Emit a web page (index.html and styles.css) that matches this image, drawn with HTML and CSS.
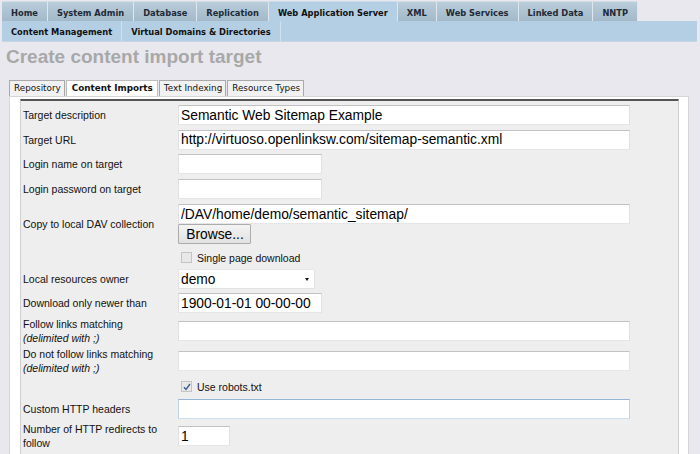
FILE: index.html
```html
<!DOCTYPE html>
<html>
<head>
<meta charset="utf-8">
<title>Create content import target</title>
<link rel="stylesheet" href="styles.css">
</head>
<body>
<div class="topnav">
  <a class="tab">Home</a>
  <a class="tab">System Admin</a>
  <a class="tab">Database</a>
  <a class="tab">Replication</a>
  <a class="tab active">Web Application Server</a>
  <a class="tab">XML</a>
  <a class="tab">Web Services</a>
  <a class="tab">Linked Data</a>
  <a class="tab">NNTP</a>
</div>
<div class="subnav">
  <a class="sub">Content Management</a>
  <a class="sub">Virtual Domains &amp; Directories</a>
</div>
<h1 class="title">Create content import target</h1>
<div class="ptabs">
  <span class="ptab">Repository</span>
  <span class="ptab active">Content Imports</span>
  <span class="ptab">Text Indexing</span>
  <span class="ptab">Resource Types</span>
</div>
<div class="panel">
  <div class="form">
    <div class="row h24">
      <div class="lbl">Target description</div>
      <div class="fld"><input class="in wide" type="text" value="Semantic Web Sitemap Example"></div>
    </div>
    <div class="row h25">
      <div class="lbl">Target URL</div>
      <div class="fld"><input class="in wide" type="text" value="http://virtuoso.openlinksw.com/sitemap-semantic.xml"></div>
    </div>
    <div class="row h24">
      <div class="lbl">Login name on target</div>
      <div class="fld"><input class="in short" type="text" value=""></div>
    </div>
    <div class="row h25">
      <div class="lbl">Login password on target</div>
      <div class="fld"><input class="in short" type="password" value=""></div>
    </div>
    <div class="row h46">
      <div class="lbl">Copy to local DAV collection</div>
      <div class="fld">
        <input class="in wide" type="text" value="/DAV/home/demo/semantic_sitemap/">
        <button class="btn" type="button">Browse...</button>
      </div>
    </div>
    <div class="row h20">
      <div class="lbl"></div>
      <div class="fld check-line">
        <span class="cb"></span><span class="cbtext">Single page download</span>
      </div>
    </div>
    <div class="row h24">
      <div class="lbl">Local resources owner</div>
      <div class="fld">
        <div class="sel"><span class="seltext">demo</span><span class="arrow"></span></div>
      </div>
    </div>
    <div class="row h24">
      <div class="lbl">Download only newer than</div>
      <div class="fld"><input class="in short" type="text" value="1900-01-01 00-00-00"></div>
    </div>
    <div class="row h31">
      <div class="lbl">Follow links matching<br><i>(delimited with ;)</i></div>
      <div class="fld"><input class="in wide" type="text" value=""></div>
    </div>
    <div class="row h30">
      <div class="lbl">Do not follow links matching<br><i>(delimited with ;)</i></div>
      <div class="fld"><input class="in wide" type="text" value=""></div>
    </div>
    <div class="row h20">
      <div class="lbl"></div>
      <div class="fld check-line">
        <span class="cb checked"><svg width="8" height="8" viewBox="0 0 8 8"><path d="M1 4.2 L3 6.4 L7 1" fill="none" stroke="#3d5f8c" stroke-width="1.4"/></svg></span><span class="cbtext">Use robots.txt</span>
      </div>
    </div>
    <div class="row h25">
      <div class="lbl">Custom HTTP headers</div>
      <div class="fld"><input class="in wide focus" type="text" value=""></div>
    </div>
    <div class="row h30">
      <div class="lbl">Number of HTTP redirects to<br>follow</div>
      <div class="fld"><input class="in tiny" type="text" value="1"></div>
    </div>
  </div>
</div>
</body>
</html>
```
FILE: styles.css
```css
html, body {
  margin: 0;
  padding: 0;
  background: #e8e8ee;
  overflow: hidden;
}
body {
  font-family: "Liberation Sans", Arial, sans-serif;
  color: #111;
}

.topnav {
  display: flex;
  margin-left: 2px;
  padding-top: 1px;
  height: 20px;
}
.tab {
  display: block;
  height: 20px;
  box-sizing: border-box;
  padding: 2px 9px 0 9px;
  line-height: 18px;
  font-family: "DejaVu Sans", Verdana, sans-serif;
  font-weight: bold;
  font-size: 8.3px;
  color: #1e2a36;
  white-space: nowrap;
  background: linear-gradient(#b9cddb, #a3b9c9);
  border-right: 1px solid #dfe6ee;
  border-top: 1px solid #d4dee7;
}
.tab.active {
  background: #b4cee4;
  color: #111;
  border-top-color: #c9dcec;
}

.subnav {
  display: flex;
  margin-left: 2px;
  width: 695px;
  height: 21px;
  background: #b4cee4;
  border-bottom: 1px solid #c6d6e4;
  box-sizing: border-box;
}
.sub {
  display: block;
  padding: 2px 9px 0 9px;
  line-height: 18px;
  font-family: "DejaVu Sans", Verdana, sans-serif;
  font-weight: bold;
  font-size: 8.3px;
  color: #111;
  white-space: nowrap;
  border-right: 1px solid #d2e0ec;
}

.title {
  margin: 4px 0 12px 6px;
  font-family: "Liberation Sans", Arial, sans-serif;
  font-size: 19px;
  line-height: 22px;
  font-weight: bold;
  color: #a8a8a8;
}

.ptabs {
  display: flex;
  margin-left: 9px;
  height: 16px;
}
.ptab {
  display: block;
  box-sizing: border-box;
  height: 16px;
  padding: 0 3px 0 4px;
  line-height: 15px;
  font-family: "DejaVu Sans", Verdana, sans-serif;
  font-size: 8.8px;
  color: #111;
  white-space: nowrap;
  background: #f1f1f1;
  border: 1px solid #a9a9a9;
  border-bottom: none;
  margin-right: 1px;
}
.ptab.active {
  background: #fff;
  font-weight: bold;
  padding: 0 4px 0 5px;
  border-color: #bdbdbd;
}

.panel {
  margin-left: 9px;
  width: 680px;
  box-sizing: border-box;
  background: #fff;
  border: 1px solid #d6d6d6;
  padding-top: 2px;
  padding-bottom: 40px;
}
.form {
  margin-left: 10px;
  width: 659px;
  box-sizing: border-box;
  background: #eeeeee;
  border-top: 2px solid #555;
  border-left: 1px solid #cfcfcf;
  border-right: 1px solid #cfcfcf;
  padding-top: 2px;
  padding-bottom: 30px;
}

.row {
  display: flex;
  align-items: center;
}
.h20 { height: 20px; }
.h24 { height: 24px; }
.h25 { height: 25px; }
.h30 { height: 30px; }
.h31 { height: 31px; }
.h46 { height: 46px; }

.lbl {
  width: 157px;
  box-sizing: border-box;
  padding-left: 2px;
  font-size: 10.5px;
  line-height: 14px;
  color: #111;
  flex: none;
}
.lbl i {
  font-style: italic;
}
.fld {
  display: flex;
  flex-direction: column;
  align-items: flex-start;
}

.in {
  box-sizing: border-box;
  height: 20px;
  margin: 0;
  padding: 0 2px;
  font-family: "Liberation Sans", Arial, sans-serif;
  font-size: 13.8px;
  color: #000;
  background: #fff;
  border: 1px solid #e0e0e0;
  border-top-color: #c2c2c2;
  border-bottom-color: #e6e6ea;
  outline: none;
}
.in.wide { width: 452px; }
.in.short { width: 144px; }
.in.tiny { width: 52px; }
.in.focus {
  border-color: #bcd3e8;
  border-top-color: #94b6d6;
  border-bottom-color: #cfe0ef;
}

.btn {
  box-sizing: border-box;
  height: 20px;
  width: 73px;
  margin: 0;
  padding: 0 0 0 1px;
  font-family: "Liberation Sans", Arial, sans-serif;
  font-size: 13.8px;
  color: #000;
  background: linear-gradient(#f4f4f4, #e1e1e1);
  border: 1px solid #acacac;
  border-radius: 1px;
}

.check-line {
  flex-direction: row;
  align-items: center;
  padding-top: 1px;
}
.cb {
  display: flex;
  align-items: center;
  justify-content: center;
  box-sizing: border-box;
  width: 11px;
  height: 11px;
  margin-left: 3px;
  margin-right: 5px;
  background: #e8e8e8;
  border: 1px solid #c4c4c4;
}
.cbtext {
  font-size: 10.5px;
  line-height: 14px;
  color: #111;
}

.sel {
  box-sizing: border-box;
  width: 137px;
  height: 20px;
  display: flex;
  align-items: center;
  justify-content: space-between;
  padding: 0 5px 0 2px;
  background: #fff;
  border: 1px solid #e2e2e2;
  border-top-color: #e6e6e6;
}
.seltext {
  font-size: 13.8px;
  color: #000;
}
.arrow {
  width: 0;
  height: 0;
  border-left: 2.5px solid transparent;
  border-right: 2.5px solid transparent;
  border-top: 3px solid #111;
  margin-top: 1px;
}
```
